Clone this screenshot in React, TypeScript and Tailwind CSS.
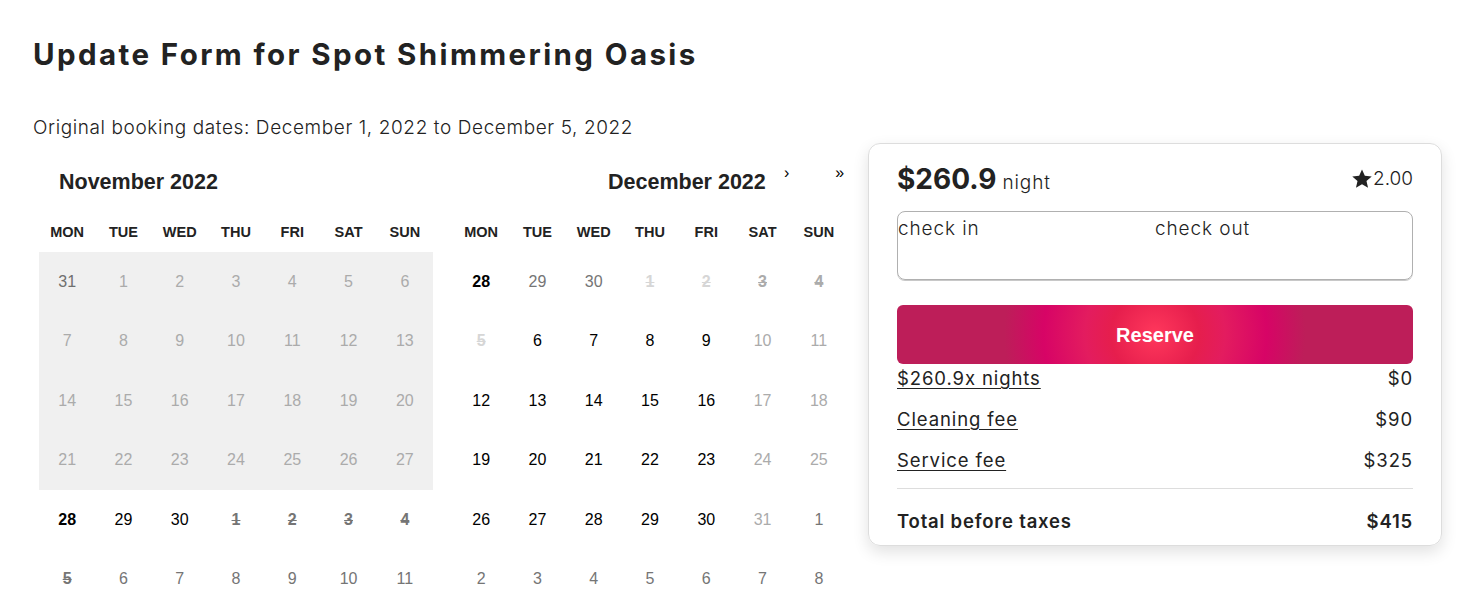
import React from "react";

type Cell = { n: number; k: string; gray?: boolean };

const tone: Record<string, string> = {
	dis: "text-[#ababab]",
	disn: "text-[#6f6f6f]",
	today: "font-bold text-black",
	on: "text-black",
	nb: "text-[#757575]",
	bk: "line-through font-bold text-[#757575]",
	bkl: "line-through font-bold text-[#d6d6d6]",
	bkm: "line-through font-bold text-[#ababab]",
	we: "text-[#ababab]",
};

const weekdays = ["MON", "TUE", "WED", "THU", "FRI", "SAT", "SUN"];

const november: Cell[] = [
	{ n: 31, k: "disn", gray: true },
	...[1, 2, 3, 4, 5, 6].map((n) => ({ n, k: "dis", gray: true })),
	...Array.from({ length: 21 }, (_, i) => ({ n: i + 7, k: "dis", gray: true })),
	{ n: 28, k: "today" },
	{ n: 29, k: "on" },
	{ n: 30, k: "on" },
	...[1, 2, 3, 4].map((n) => ({ n, k: "bk" })),
	{ n: 5, k: "bk" },
	...[6, 7, 8, 9, 10, 11].map((n) => ({ n, k: "nb" })),
];

const decRow = (start: number, count: number) =>
	Array.from({ length: count }, (_, i) => ({
		n: start + i,
		k: i >= 5 ? "we" : "on",
	}));

const december: Cell[] = [
	{ n: 28, k: "today" },
	{ n: 29, k: "nb" },
	{ n: 30, k: "nb" },
	{ n: 1, k: "bkl" },
	{ n: 2, k: "bkl" },
	{ n: 3, k: "bkm" },
	{ n: 4, k: "bkm" },
	{ n: 5, k: "bkl" },
	...decRow(6, 6).map((c, i) => ({ ...c, k: i >= 4 ? "we" : "on" })),
	...decRow(12, 7),
	...decRow(19, 7),
	...[26, 27, 28, 29, 30].map((n) => ({ n, k: "on" })),
	{ n: 31, k: "we" },
	{ n: 1, k: "nb" },
	...[2, 3, 4, 5, 6, 7, 8].map((n) => ({ n, k: "nb" })),
];

const MonthGrid = ({ cells }: { cells: Cell[] }) => (
	<div className="w-[394px]">
		<div className="grid grid-cols-7 h-[38px] items-center">
			{weekdays.map((w) => (
				<div key={w} className="text-center text-[14.5px] font-bold text-[#222]">
					{w}
				</div>
			))}
		</div>
		<div className="grid grid-cols-7">
			{cells.map((c, i) => (
				<div
					key={i}
					className={`h-[59.5px] flex items-center justify-center text-[16px] ${
						c.gray ? "bg-[#f0f0f0]" : ""
					} ${tone[c.k]}`}
				>
					{c.n}
				</div>
			))}
		</div>
	</div>
);

const Star = () => (
	<svg width="22" height="22" viewBox="0 0 24 24" className="fill-[#222]">
		<path d="M12 1.5l3.1 7 7.5.7-5.7 5 1.7 7.4L12 17.8l-6.6 3.8 1.7-7.4-5.7-5 7.5-.7z" />
	</svg>
);

const FeeRow = ({ label, value }: { label: string; value: string }) => (
	<div className="flex justify-between items-center h-[30px] text-[18.5px] tracking-[0.9px]">
		<span className="underline underline-offset-[3px]">{label}</span>
		<span>{value}</span>
	</div>
);

export default function App() {
	return (
		<div className="min-h-screen bg-white text-[#222] font-['Inter',sans-serif] pl-[33px]">
			<h1 className="pt-[34px] text-[29.5px] leading-[40px] font-bold tracking-[2.4px]">
				Update Form for Spot Shimmering Oasis
			</h1>
			<p className="mt-[42px] text-[19px] leading-[24px] font-light tracking-[0.6px]">
				Original booking dates: December 1, 2022 to December 5, 2022
			</p>
			<div className="flex items-start mt-[3px]">
				<div className="ml-[6px] w-[808px] pt-[17px] font-['Liberation_Sans',Arial,sans-serif]">
					<div className="flex items-start h-[44px] gap-[20px]">
						<div className="w-[394px] pl-[20px] text-[21.5px] leading-[44px] font-bold text-[#222]">
							November 2022
						</div>
						<div className="w-[394px] flex items-start pl-[155px]">
							<span className="shrink-0 whitespace-nowrap text-[21.5px] leading-[44px] font-bold text-[#222]">
								December 2022
							</span>
							<span className="shrink-0 w-[20px] ml-[11px] text-center text-[16px] leading-[26px] text-black">›</span>
							<span className="shrink-0 w-[20px] ml-[33px] text-center text-[16px] leading-[26px] text-black">»</span>
						</div>
					</div>
					<div className="flex gap-[20px] mt-[10px]">
						<MonthGrid cells={november} />
						<MonthGrid cells={december} />
					</div>
				</div>
				<div className="ml-[21px] w-[574px] h-[403px] rounded-[12px] border border-[#dddddd] shadow-[0_6px_16px_rgba(0,0,0,0.12)] px-[28px] pt-[17px]">
					<div className="flex justify-between items-center h-[36px]">
						<div className="flex items-baseline gap-[6px]">
							<span className="text-[28px] font-bold">$260.9</span>
							<span className="text-[19px] font-light tracking-[0.9px]">night</span>
						</div>
						<div className="flex items-center text-[19px] font-light">
							<Star />
							<span>2.00</span>
						</div>
					</div>
					<div className="mt-[14px] h-[69px] border border-[#b0b0b0] rounded-[8px] shadow-[0_1px_0_#c8c8c8] flex text-[19px] font-light tracking-[0.9px] leading-[34px]">
						<div className="w-1/2">check in</div>
						<div className="w-1/2">check out</div>
					</div>
					<button className="mt-[25px] w-full h-[59px] rounded-[6px] text-white text-[20px] font-bold font-['Liberation_Sans',Arial,sans-serif] bg-[radial-gradient(circle_at_center,#ff385c_0%,#e61e4d_17%,#e31c5f_27%,#d70466_43%,#bd1e59_58%,#bd1e59_100%)]">
						Reserve
					</button>
					<FeeRow label="$260.9x nights" value="$0" />
					<div className="mt-[11px]">
						<FeeRow label="Cleaning fee" value="$90" />
					</div>
					<div className="mt-[11px]">
						<FeeRow label="Service fee" value="$325" />
					</div>
					<div className="mt-[12px] border-t border-[#dddddd]" />
					<div className="mt-[18px] flex justify-between items-center h-[30px] text-[18.5px] font-semibold tracking-[0.8px]">
						<span>Total before taxes</span>
						<span>$415</span>
					</div>
				</div>
			</div>
		</div>
	);
}
